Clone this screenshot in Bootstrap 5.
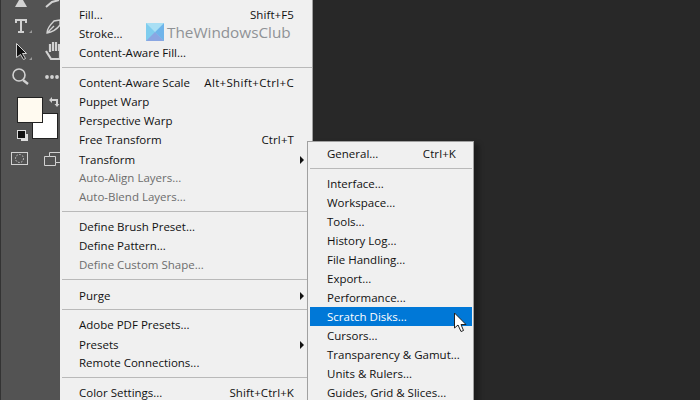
<!DOCTYPE html>
<html lang="en"><head><meta charset="utf-8"><title>Preferences menu</title>
<link href="https://cdn.jsdelivr.net/npm/bootstrap@5.3.0/dist/css/bootstrap.min.css" rel="stylesheet">
<style>
html,body{height:100%;overflow:hidden}
body{background:#282828;width:700px;height:400px;font-family:"Open Sans","Noto Sans",sans-serif;font-size:11.5px;color:#111;position:relative}
.app-frame{width:700px;height:400px}
.tool-rail{width:60px;height:400px;background:#535353;border-left:1px solid #333;position:relative;flex:none}
.tool-rail svg{position:absolute;left:-1px;top:0}
.menu-main{width:253px;height:400px;background:#f0f0f0;border-right:1px solid #a0a0a0;padding:4.5px 0 0 1px;overflow:hidden;flex:none}
.menu-sub{position:absolute;left:307px;top:141px;width:167px;height:270px;background:#f0f0f0;border:1px solid #a0a0a0;padding:2px 1px 0 2px;box-shadow:5px 3px 5px rgba(0,0,0,.3)}
.mi{height:19px;line-height:19px;padding:0 18px 0 18px;white-space:nowrap;position:relative}
.menu-sub .mi{padding:0 16px 0 17px}
.mi.off{color:#6d6d6d}
.mi.has-sub{line-height:21px}
.mi.has-sub::after{content:"";position:absolute;right:8px;top:7px;border-left:4px solid #111;border-top:4px solid transparent;border-bottom:4px solid transparent}
.mi.pick{background:#0078d7;color:#fff}
.keys{letter-spacing:.1px}
.keys-wide{letter-spacing:.33px}
.sep{height:11px;padding-top:5px}
.sep::before{content:"";display:block;height:1px;background:#b9b9b9}
.menu-main .sep{margin-left:1px;margin-right:-1px}
.wmark{position:absolute;left:146px;top:23px;gap:3px}
.wmark-text{font-size:15.3px;color:#8f9296;line-height:18px;font-family:"Open Sans",sans-serif}
.ptr{position:absolute;left:454px;top:312px}
</style></head>
<body>
<div class="d-flex app-frame">
<div class="tool-rail">
<svg width="60" height="180" viewBox="0 0 60 180" fill="none" stroke="#d2d2d2">
<path d="M15 7 L19 0 L23 0 L27 7 Z" fill="#d2d2d2" stroke="none"/>
<path d="M46 7 L52 2 L59 0" stroke-width="2"/>
<path d="M29 33h3v-3zM29 60h3v-3z" fill="#9a9a9a" stroke="none"/>
<path d="M16 20h10M21 20v12M18 32h6M16 19v4M26 19v4" stroke-width="2"/>
<path d="M47 33c0-4 3-8 7-12l6-1v5c-3 4-7 7-13 8zM47 33l7-7" stroke-width="1.4"/>
<path d="M16.500 43.500v14l4-3 3 5 2-1-3-5h4z" fill="#111" stroke="#d2d2d2"/>
<path d="M46 51l5 8h9V50M50 52V44M53 51V42M56 51V42M59 51V44" stroke-width="2.200"/>
<circle cx="19" cy="75" r="6" stroke-width="1.6"/><path d="M23 80l5 4" stroke-width="2.400"/>
<circle cx="47" cy="77" r="1.900" fill="#d2d2d2" stroke="none"/><circle cx="52" cy="77" r="1.900" fill="#d2d2d2" stroke="none"/><circle cx="57" cy="77" r="1.900" fill="#d2d2d2" stroke="none"/>
<rect x="32.500" y="113.500" width="25" height="25" fill="#fff" stroke="#222"/>
<rect x="17.500" y="97.500" width="25" height="25" fill="#fffaf0" stroke="#222"/>
<path d="M49 100l3-3v2h6v5h1.500l-2.500 3-2.500-3h1.500v-3h-4v2z" fill="#d2d2d2" stroke="none"/>
<rect x="21" y="134" width="7" height="7" fill="#ddd" stroke="none"/><rect x="17.500" y="130.500" width="8" height="8" fill="#111" stroke="#ddd"/>
<rect x="11.500" y="152.500" width="16" height="12"/><circle cx="19.500" cy="158.500" r="4" stroke-dasharray="1.500 1.500"/>
<path d="M44.500 165.500v-9h5v-4h10.500M44.500 165.500h11v-3h4.500M49.500 156.500h6v6"/>
</svg>
</div>
<div class="menu-main">
<div class="mi d-flex justify-content-between"><span>Fill...</span><span class="keys">Shift+F5</span></div>
<div class="mi">Stroke...</div>
<div class="mi">Content-Aware Fill...</div>
<div class="sep"></div>
<div class="mi d-flex justify-content-between"><span>Content-Aware Scale</span><span class="keys-wide">Alt+Shift+Ctrl+C</span></div>
<div class="mi">Puppet Warp</div>
<div class="mi">Perspective Warp</div>
<div class="mi d-flex justify-content-between"><span>Free Transform</span><span class="keys">Ctrl+T</span></div>
<div class="mi has-sub">Transform</div>
<div class="mi off">Auto-Align Layers...</div>
<div class="mi off">Auto-Blend Layers...</div>
<div class="sep"></div>
<div class="mi">Define Brush Preset...</div>
<div class="mi">Define Pattern...</div>
<div class="mi off">Define Custom Shape...</div>
<div class="sep"></div>
<div class="mi has-sub">Purge</div>
<div class="sep"></div>
<div class="mi">Adobe PDF Presets...</div>
<div class="mi has-sub">Presets</div>
<div class="mi">Remote Connections...</div>
<div class="sep"></div>
<div class="mi d-flex justify-content-between"><span>Color Settings...</span><span class="keys">Shift+Ctrl+K</span></div>
</div>
</div>
<div class="menu-sub">
<div class="mi d-flex justify-content-between"><span>General...</span><span class="keys">Ctrl+K</span></div>
<div class="sep"></div>
<div class="mi">Interface...</div>
<div class="mi">Workspace...</div>
<div class="mi">Tools...</div>
<div class="mi">History Log...</div>
<div class="mi">File Handling...</div>
<div class="mi">Export...</div>
<div class="mi">Performance...</div>
<div class="mi pick">Scratch Disks...</div>
<div class="mi">Cursors...</div>
<div class="mi">Transparency &amp; Gamut...</div>
<div class="mi">Units &amp; Rulers...</div>
<div class="mi">Guides, Grid &amp; Slices...</div>
</div>
<div class="wmark d-flex align-items-center">
<svg width="18" height="18" viewBox="0 0 18 18"><rect width="18" height="18" fill="#7fcdee"/><path d="M18 0v18L9 9z" fill="#6fb4ea"/><path d="M0 18L9 9l9 9z" fill="#8aa6e2"/><path d="M0 0h18L9 9z" fill="#a9dff4"/></svg>
<span class="wmark-text">TheWindowsClub</span>
</div>
<svg class="ptr" width="14" height="21" viewBox="0 0 14 21"><path d="M.5 1v15l3.500-3 3 6.500 2.500-1-2.500-6h5z" fill="#fff" stroke="#222"/></svg>
<script src="https://cdn.jsdelivr.net/npm/bootstrap@5.3.0/dist/js/bootstrap.bundle.min.js"></script>
</body></html>
